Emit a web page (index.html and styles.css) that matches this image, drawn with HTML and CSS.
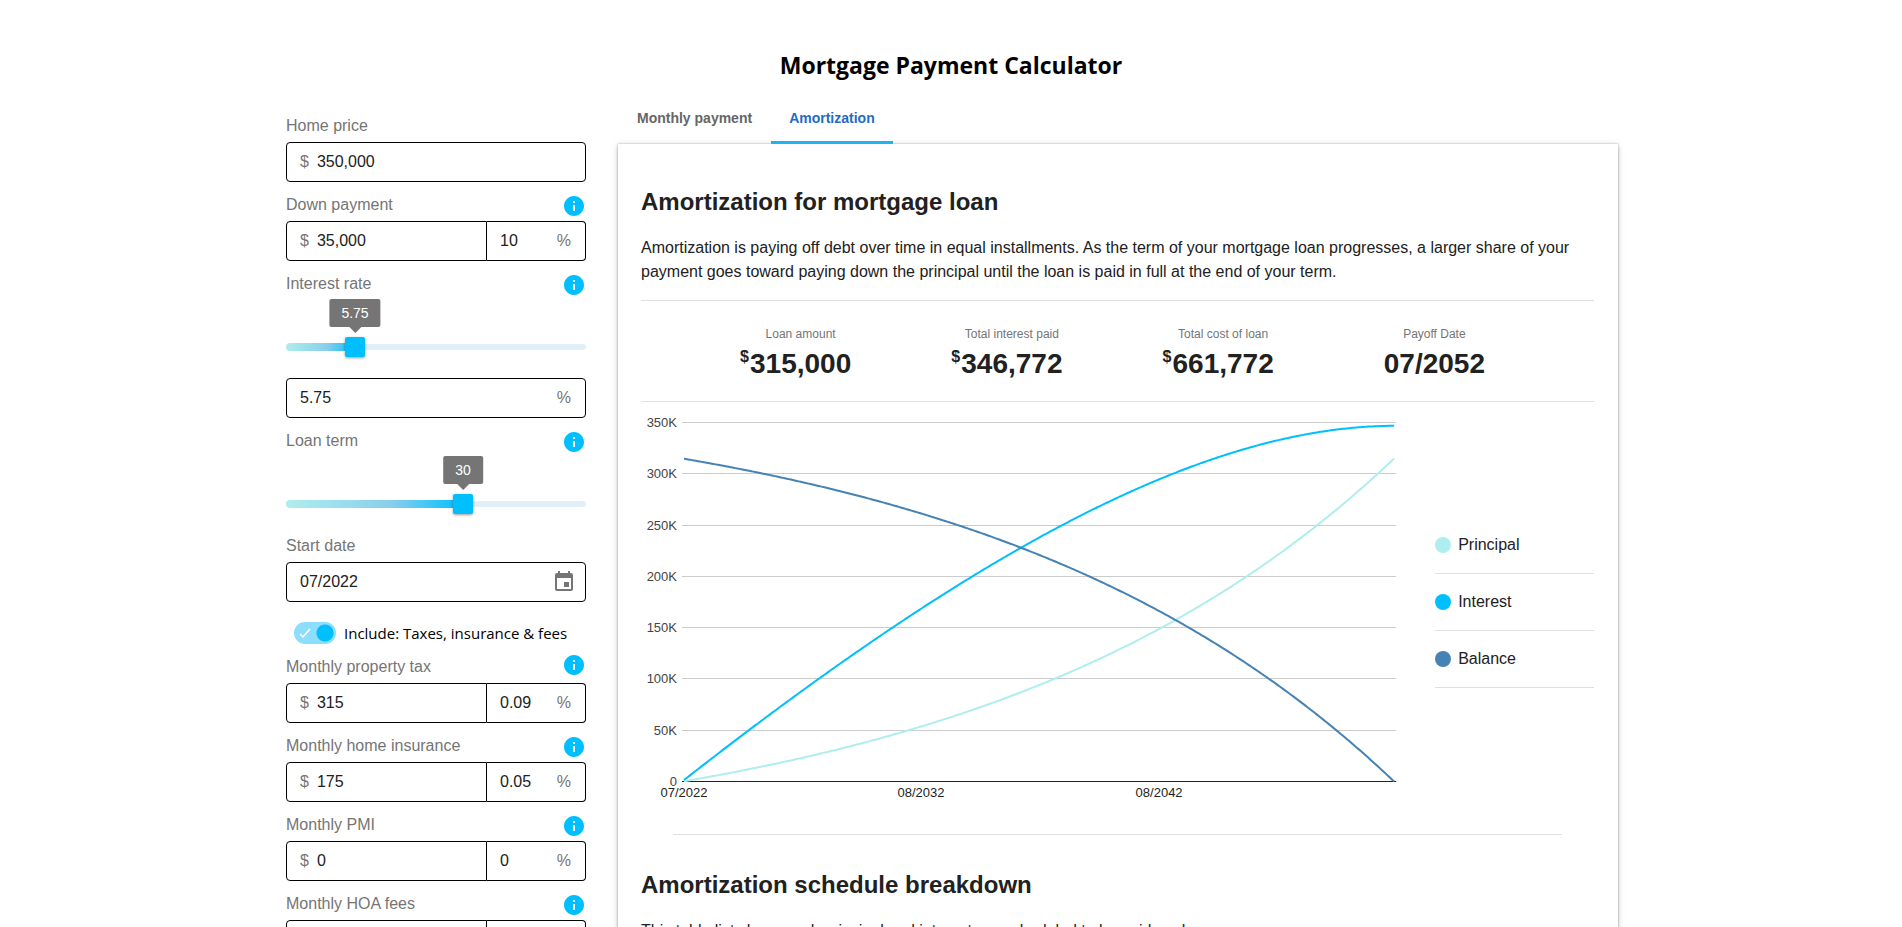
FILE: index.html
```html
<!DOCTYPE html>
<html lang="en">
<head>
<meta charset="utf-8">
<meta name="viewport" content="width=device-width, initial-scale=1">
<title>Mortgage Payment Calculator</title>
<link rel="stylesheet" href="styles.css">
</head>
<body>
<svg class="sprite" aria-hidden="true">
  <symbol id="icon-info" viewBox="0 0 24 24"><path d="M12 2C6.48 2 2 6.48 2 12s4.480 10 10 10 10-4.480 10-10S17.520 2 12 2zm1 15h-2v-6h2v6zm0-8h-2V7h2v2z"/></symbol>
  <symbol id="icon-event" viewBox="0 0 24 24"><path d="M17 12h-5v5h5v-5zM16 1v2H8V1H6v2H5c-1.110 0-1.990.9-1.990 2L3 19c0 1.100.89 2 2 2h14c1.100 0 2-.9 2-2V5c0-1.100-.9-2-2-2h-1V1h-2zm3 18H5V8h14v11z"/></symbol>
</svg>
<h1 class="title">Mortgage Payment Calculator</h1>
<main class="layout">
  <form class="sidebar">
    <div class="field">
      <div class="field-head"><label for="price">Home price</label></div>
      <div class="box"><span class="currency">$</span><input id="price" type="text" value="350,000"></div>
    </div>
    <div class="field">
      <div class="field-head"><label for="down">Down payment</label><button class="info" type="button" aria-label="About down payment"><svg><use href="#icon-info"/></svg></button></div>
      <div class="split">
        <div class="box"><span class="currency">$</span><input id="down" type="text" value="35,000"></div>
        <div class="box"><input type="text" value="10" aria-label="Down payment percent"><span class="unit">%</span></div>
      </div>
    </div>
    <div class="field">
      <div class="field-head"><label for="rate">Interest rate</label><button class="info" type="button" aria-label="About interest rate"><svg><use href="#icon-info"/></svg></button></div>
      <div class="slider" style="--pos: 23%">
        <output class="bubble" for="rate-range">5.75</output>
        <input id="rate-range" type="range" min="0" max="25" step="0.01" value="5.75" aria-label="Interest rate">
      </div>
      <div class="box slider-box"><input id="rate" type="text" value="5.75"><span class="unit">%</span></div>
    </div>
    <div class="field">
      <div class="field-head"><label for="term">Loan term</label><button class="info" type="button" aria-label="About loan term"><svg><use href="#icon-info"/></svg></button></div>
      <div class="slider" style="--pos: 59%">
        <output class="bubble" for="term">30</output>
        <input id="term" type="range" min="0.5" max="50.5" step="0.1" value="30">
      </div>
    </div>
    <div class="field">
      <div class="field-head"><label for="start">Start date</label></div>
      <div class="box"><input id="start" type="text" value="07/2022"><button class="calendar" type="button" aria-label="Choose date"><svg><use href="#icon-event"/></svg></button></div>
    </div>
    <div class="toggle-row">
      <span class="switch">
        <input id="include" type="checkbox" checked>
        <svg class="switch-check" viewBox="0 0 16 16" aria-hidden="true"><path d="M2 9l3 3 7-8"/></svg>
      </span>
      <label for="include">Include: Taxes, insurance &amp; fees</label>
    </div>
    <div class="field">
      <div class="field-head field-head-top"><label for="tax">Monthly property tax</label><button class="info" type="button" aria-label="About property tax"><svg><use href="#icon-info"/></svg></button></div>
      <div class="split">
        <div class="box"><span class="currency">$</span><input id="tax" type="text" value="315"></div>
        <div class="box"><input type="text" value="0.09" aria-label="Property tax percent"><span class="unit">%</span></div>
      </div>
    </div>
    <div class="field">
      <div class="field-head"><label for="insurance">Monthly home insurance</label><button class="info" type="button" aria-label="About home insurance"><svg><use href="#icon-info"/></svg></button></div>
      <div class="split">
        <div class="box"><span class="currency">$</span><input id="insurance" type="text" value="175"></div>
        <div class="box"><input type="text" value="0.05" aria-label="Home insurance percent"><span class="unit">%</span></div>
      </div>
    </div>
    <div class="field">
      <div class="field-head"><label for="pmi">Monthly PMI</label><button class="info" type="button" aria-label="About PMI"><svg><use href="#icon-info"/></svg></button></div>
      <div class="split">
        <div class="box"><span class="currency">$</span><input id="pmi" type="text" value="0"></div>
        <div class="box"><input type="text" value="0" aria-label="PMI percent"><span class="unit">%</span></div>
      </div>
    </div>
    <div class="field">
      <div class="field-head"><label for="hoa">Monthly HOA fees</label><button class="info" type="button" aria-label="About HOA fees"><svg><use href="#icon-info"/></svg></button></div>
      <div class="split">
        <div class="box"><span class="currency">$</span><input id="hoa" type="text" value="0"></div>
        <div class="box"><input type="text" value="0" aria-label="HOA fees percent"><span class="unit">%</span></div>
      </div>
    </div>
  </form>

  <section class="results">
    <div class="tabs" role="tablist">
      <button class="tab" role="tab" type="button" aria-selected="false">Monthly payment</button>
      <button class="tab tab-active" role="tab" type="button" aria-selected="true">Amortization</button>
    </div>
    <div class="card">
      <h2>Amortization for mortgage loan</h2>
      <p>Amortization is paying off debt over time in equal installments. As the term of your mortgage loan progresses, a larger share of your payment goes toward paying down the principal until the loan is paid in full at the end of your term.</p>
      <dl class="totals">
        <div class="total"><dt>Loan amount</dt><dd><sup>$</sup>315,000</dd></div>
        <div class="total"><dt>Total interest paid</dt><dd><sup>$</sup>346,772</dd></div>
        <div class="total"><dt>Total cost of loan</dt><dd><sup>$</sup>661,772</dd></div>
        <div class="total"><dt>Payoff Date</dt><dd>07/2052</dd></div>
      </dl>
      <div class="chart-row">
        <svg class="chart" viewBox="0 0 794 400" role="img" aria-label="Principal, interest and balance over the loan term">
          <g class="grid" id="grid"></g>
          <path class="axis" d="M41 379.500H755"/>
          <g class="y-labels" id="y-labels"></g>
          <g class="x-labels">
            <text x="43" y="395">07/2022</text>
            <text x="280" y="395">08/2032</text>
            <text x="518" y="395">08/2042</text>
          </g>
          <path class="curve principal" id="curve-principal"/>
          <path class="curve interest" id="curve-interest"/>
          <path class="curve balance" id="curve-balance"/>
        </svg>
        <ul class="legend">
          <li><span class="dot dot-principal"></span>Principal</li>
          <li><span class="dot dot-interest"></span>Interest</li>
          <li><span class="dot dot-balance"></span>Balance</li>
        </ul>
      </div>
      <hr class="rule">
      <h2>Amortization schedule breakdown</h2>
      <p>This table lists how much principal and interest are scheduled to be paid each</p>
    </div>
  </section>
</main>
<script src="chart.js"></script>
</body>
</html>
```
FILE: styles.css
```css
* { box-sizing: border-box; }

html { scrollbar-width: none; }

body {
  margin: 0;
  background: #fff;
  color: #212121;
  font: 16px/24px "Liberation Sans", Arial, sans-serif;
}

button { border: 0; padding: 0; background: none; font: inherit; cursor: pointer; }

svg { display: block; }

.sprite { display: none; }

.title {
  margin: 0;
  padding-top: 48px;
  text-align: center;
  color: #000;
  font: bold 23px/34px "Open Sans", "Noto Sans", sans-serif;
}

.layout {
  display: grid;
  grid-template-columns: 300px minmax(0, 1fr);
  column-gap: 32px;
  max-width: 1334px;
  margin: 0 auto;
  padding-left: 2px;
}

/* Sidebar form */
.sidebar { padding-top: 32px; }

.field { margin-bottom: 11px; }

.field-head {
  display: flex;
  align-items: center;
  justify-content: space-between;
  height: 26px;
  margin-bottom: 2px;
  padding-right: 2px;
  color: #757575;
}

.field-head label { align-self: flex-start; }

.field-head-top { align-items: flex-start; }

.info { width: 20px; height: 20px; color: #00bfff; }

.info svg { width: 24px; height: 24px; margin: -2px; fill: currentColor; }

.box {
  display: flex;
  align-items: center;
  min-width: 0;
  height: 40px;
  padding: 0 14px 0 13px;
  border: 1px solid #000;
  border-radius: 4px;
}

.box input {
  flex: 1;
  min-width: 0;
  width: 100%;
  padding: 0;
  border: 0;
  outline: 0;
  background: none;
  color: #212121;
  font: inherit;
}

.currency { margin-right: 8px; color: #757575; }

.unit { color: #757575; }

.split { display: grid; grid-template-columns: 201px 1fr; }

.split .box:first-child { border-radius: 4px 0 0 4px; }

.split .box:last-child { border-left: 0; border-radius: 0 4px 4px 0; }

.calendar { width: 24px; height: 24px; margin-right: -5px; color: #757575; }

.calendar svg { width: 24px; height: 24px; fill: currentColor; }

.slider {
  position: relative;
  height: 66px;
  padding-top: 37px;
}

.slider::before,
.slider::after {
  content: "";
  position: absolute;
  left: 0;
  border-radius: 4px;
}

.slider::before { top: 44px; width: 100%; height: 6px; background: #e1eff8; }

.slider::after {
  top: 43px;
  width: var(--pos);
  height: 8px;
  background: linear-gradient(90deg, #afeeee, #87ceeb 60%, #00bfff);
}

.slider input {
  position: relative;
  z-index: 1;
  display: block;
  appearance: none;
  width: calc(100% + 20px);
  height: 20px;
  margin: 0 -10px;
  background: none;
}

.slider input::-webkit-slider-thumb {
  appearance: none;
  width: 20px;
  height: 20px;
  border-radius: 2px;
  background: #00bfff;
  box-shadow: 0 1px 3px rgba(0, 0, 0, 0.4);
}

.bubble {
  position: absolute;
  top: -1px;
  left: var(--pos);
  padding: 2px 12px;
  transform: translateX(-50%);
  border-radius: 2px;
  background: #757575;
  color: #fff;
  font-size: 14px;
}

.bubble::after {
  content: "";
  position: absolute;
  top: 100%;
  left: 50%;
  margin-left: -6px;
  border: 6px solid transparent;
  border-top-color: #757575;
  border-bottom: 0;
}

.slider-box { margin-top: 12px; }

.toggle-row {
  display: flex;
  align-items: center;
  gap: 8px;
  height: 22px;
  margin: 20px 0 11px;
  padding-left: 8px;
  color: #000;
  font: 15px/22px "Open Sans", "Noto Sans", sans-serif;
}

.switch { position: relative; width: 42px; height: 22px; }

.switch input {
  display: block;
  appearance: none;
  width: 42px;
  height: 22px;
  margin: 0;
  border-radius: 11px;
  background: radial-gradient(circle at 31px 11px, #00bfff 8px, transparent 9px) #8cdefc;
}

.switch-check {
  position: absolute;
  top: 3px;
  left: 4px;
  width: 16px;
  height: 16px;
  fill: none;
  stroke: #fff;
  stroke-width: 1.5;
  pointer-events: none;
}

/* Results */
.tabs { display: flex; height: 62px; padding-top: 12px; }

.tab {
  padding: 0 19px;
  border-bottom: 3px solid transparent;
  color: #666;
  font-size: 14px;
  font-weight: bold;
}

.tab-active { padding: 0 18px; border-color: #1fb3f0; color: #1f6cc4; }

.card {
  padding: 42px 24px 60px 23px;
  background: #fff;
  box-shadow: 0 0 2px rgba(0, 0, 0, 0.3), 0 3px 4px 0 rgba(0, 0, 0, 0.14), 0 1px 8px 0 rgba(0, 0, 0, 0.12);
}

.card h2 { margin: 0; font-size: 24px; line-height: 32px; }

.card p { margin: 18px 0 0; }

.totals {
  display: grid;
  grid-template-columns: repeat(4, 1fr);
  margin: 16px 0 0;
  padding: 24px 54px 20px;
  border-top: 1px solid #e0e0e0;
  border-bottom: 1px solid #e0e0e0;
  text-align: center;
}

.total dt { color: #757575; font-size: 12px; line-height: 18px; }

.total dd {
  position: relative;
  width: max-content;
  margin: 4px auto 0;
  font-size: 28px;
  font-weight: bold;
  line-height: 34px;
}

.total sup {
  position: absolute;
  top: 0;
  right: 100%;
  margin-right: 1px;
  font-size: 16px;
  line-height: 20px;
}

.chart-row {
  display: grid;
  grid-template-columns: minmax(0, 5fr) minmax(0, 1fr);
  align-items: center;
}

.chart { width: 100%; height: auto; font-size: 13px; }

.grid { stroke: #ccc; }

.axis { stroke: #222; }

.y-labels { fill: #444; text-anchor: end; }

.x-labels { fill: #222; text-anchor: middle; }

.curve { fill: none; stroke-width: 2; }

.principal { stroke: #afeeee; }

.interest { stroke: #00bfff; }

.balance { stroke: #4682b4; }

.legend { margin: 0; padding: 0; list-style: none; }

.legend li {
  display: flex;
  align-items: center;
  gap: 7px;
  height: 57px;
  border-bottom: 1px solid #e0e0e0;
}

.dot { width: 16px; height: 16px; border-radius: 50%; }

.dot-principal { background: #afeeee; }

.dot-interest { background: #00bfff; }

.dot-balance { background: #4682b4; }

.rule { margin: 32px 32px 34px; border: 0; border-top: 1px solid #e0e0e0; }
```
FILE: chart.js
```js
(function () {
  const NS = "http://www.w3.org/2000/svg";
  const left = 43, right = 753, base = 379.5, top = 20.5, max = 350000;
  const loan = 315000, rate = 0.0575 / 12, months = 360;
  const growth = Math.pow(1 + rate, months);
  const payment = loan * rate * growth / (growth - 1);
  const y = v => base - (v / max) * (base - top);

  const add = (parent, name, attrs, text) => {
    const el = document.createElementNS(NS, name);
    for (const key in attrs) el.setAttribute(key, attrs[key]);
    if (text) el.textContent = text;
    document.getElementById(parent).appendChild(el);
  };

  for (let k = 0; k <= 350; k += 50) {
    const line = Math.floor(y(k * 1000)) + 0.5;
    if (k) add("grid", "path", { d: `M41 ${line}H755` });
    add("y-labels", "text", { x: 36, y: line + 4.5 }, k ? k + "K" : "0");
  }

  const points = { principal: [], interest: [], balance: [] };
  for (let m = 1; m <= months; m++) {
    const paid = loan * (Math.pow(1 + rate, m) - 1) / (growth - 1);
    const x = (left + (right - left) * (m - 1) / (months - 1)).toFixed(2);
    points.principal.push(x + " " + y(paid).toFixed(2));
    points.interest.push(x + " " + y(payment * m - paid).toFixed(2));
    points.balance.push(x + " " + y(loan - paid).toFixed(2));
  }
  for (const name in points) {
    document.getElementById("curve-" + name).setAttribute("d", "M" + points[name].join("L"));
  }
})();
```
